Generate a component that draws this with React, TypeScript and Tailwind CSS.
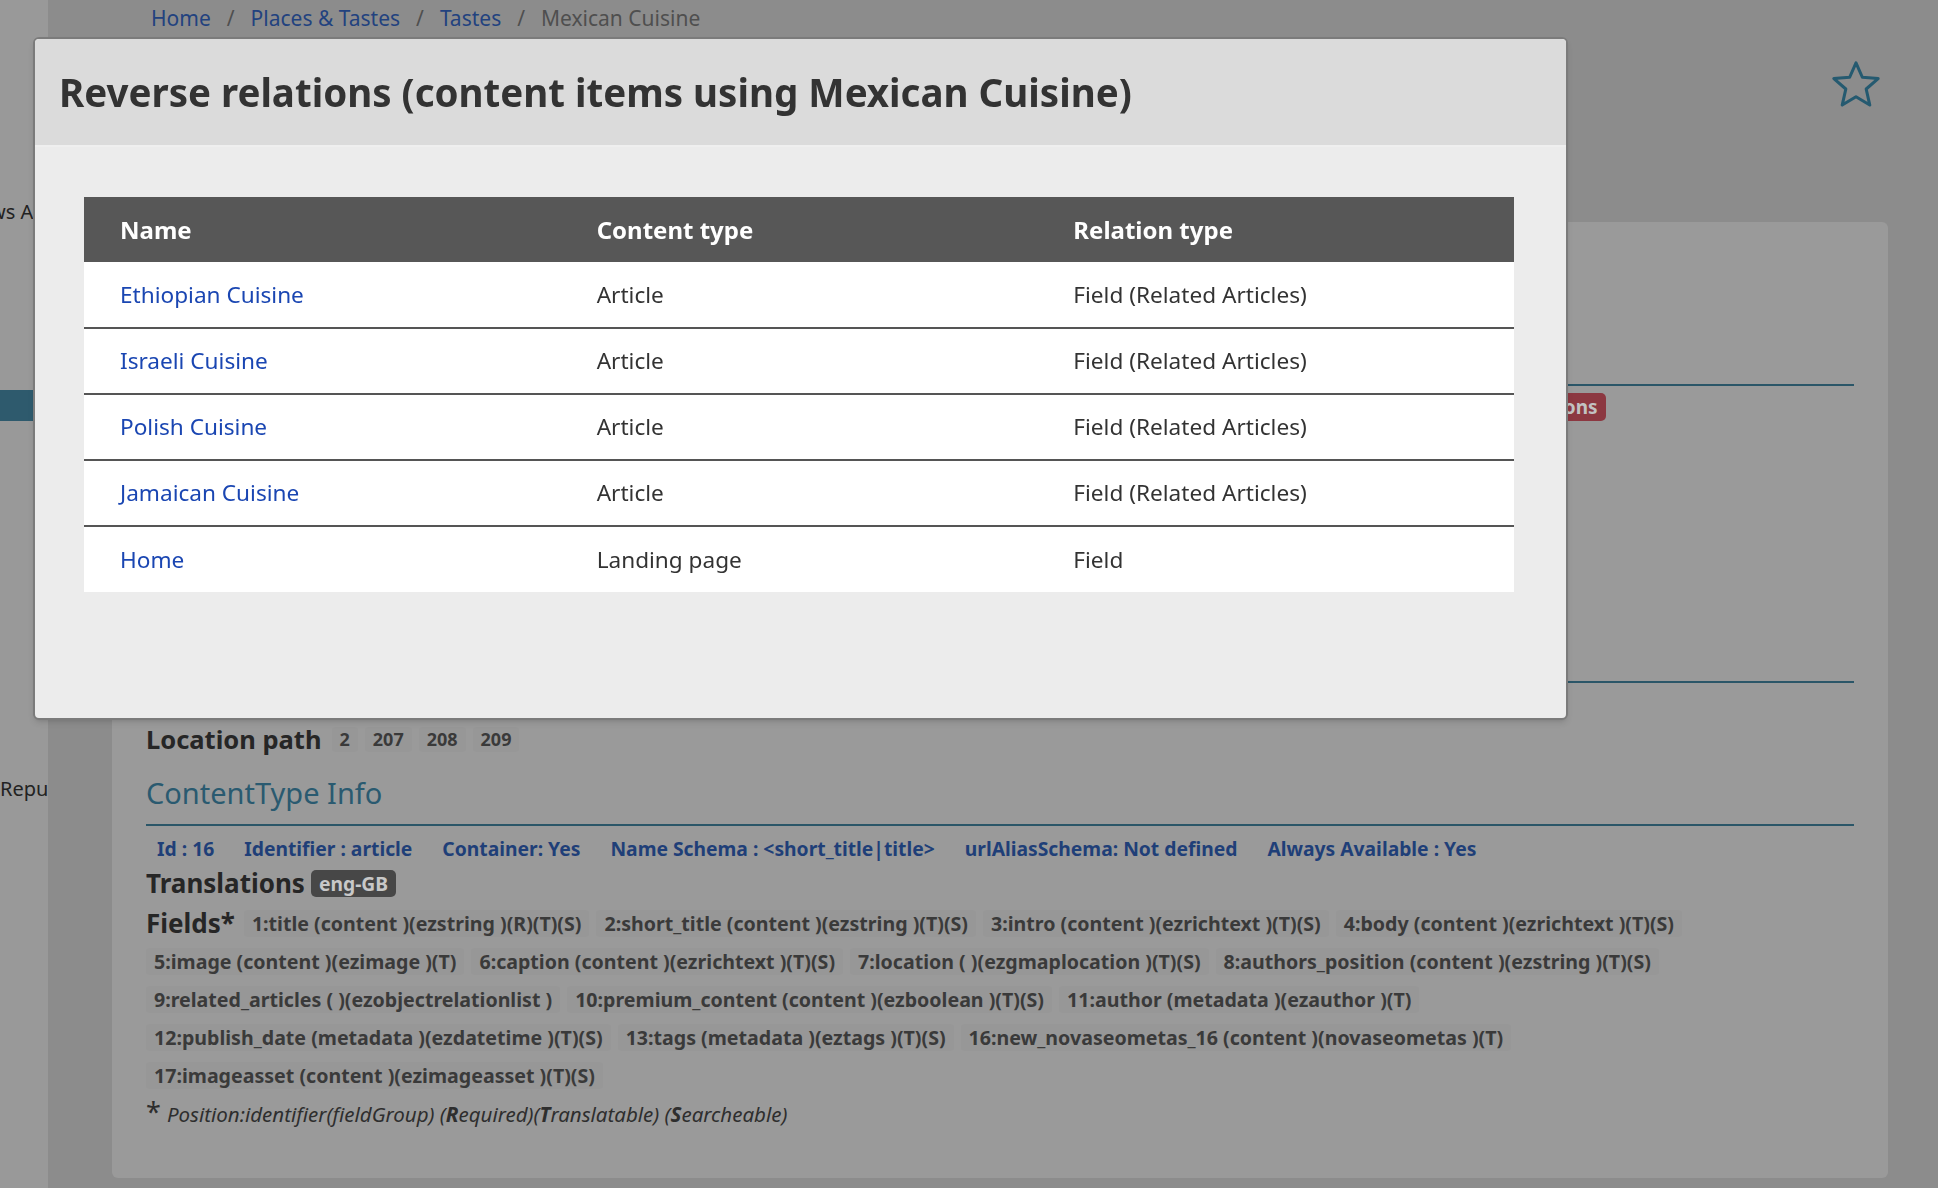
import React from "react";

const rows = [
  { name: "Ethiopian Cuisine", type: "Article", relation: "Field (Related Articles)" },
  { name: "Israeli Cuisine", type: "Article", relation: "Field (Related Articles)" },
  { name: "Polish Cuisine", type: "Article", relation: "Field (Related Articles)" },
  { name: "Jamaican Cuisine", type: "Article", relation: "Field (Related Articles)" },
  { name: "Home", type: "Landing page", relation: "Field" },
];

const fieldRows = [
  [
    "1:title (content )(ezstring )(R)(T)(S)",
    "2:short_title (content )(ezstring )(T)(S)",
    "3:intro (content )(ezrichtext )(T)(S)",
    "4:body (content )(ezrichtext )(T)(S)",
  ],
  [
    "5:image (content )(ezimage )(T)",
    "6:caption (content )(ezrichtext )(T)(S)",
    "7:location ( )(ezgmaplocation )(T)(S)",
    "8:authors_position (content )(ezstring )(T)(S)",
  ],
  [
    "9:related_articles ( )(ezobjectrelationlist )",
    "10:premium_content (content )(ezboolean )(T)(S)",
    "11:author (metadata )(ezauthor )(T)",
  ],
  [
    "12:publish_date (metadata )(ezdatetime )(T)(S)",
    "13:tags (metadata )(eztags )(T)(S)",
    "16:new_novaseometas_16 (content )(novaseometas )(T)",
  ],
  ["17:imageasset (content )(ezimageasset )(T)(S)"],
];

const info = [
  "Id : 16",
  "Identifier : article",
  "Container: Yes",
  "Name Schema : <short_title|title>",
  "urlAliasSchema: Not defined",
  "Always Available : Yes",
];

function FieldBadge({ label }: { label: string }) {
  return (
    <span className="rounded-[4px] bg-[#979797] px-[8px] py-[2px] text-[19.6px] font-bold leading-[23px] text-[#3a3a3a]">
      {label}
    </span>
  );
}

function Sidebar() {
  return (
    <aside className="flex w-[48px] shrink-0 flex-col overflow-hidden bg-[#999999] text-[20px] text-[#222]">
      <div className="mt-[198px] ml-[-36px] whitespace-nowrap leading-[28px]">News Articles</div>
      <div className="mt-[164px] h-[31px] w-[300px] bg-[#2e5a6d]" />
      <div className="mt-[354px] whitespace-nowrap leading-[28px]">Republic</div>
    </aside>
  );
}

function Breadcrumb() {
  return (
    <nav className="flex h-[37px] items-center gap-[16px] pl-[103px] text-[21px] leading-none">
      <a className="text-[#22427f]">Home</a>
      <span className="text-[#4f4f4f]">/</span>
      <a className="text-[#22427f]">Places &amp; Tastes</a>
      <span className="text-[#4f4f4f]">/</span>
      <a className="text-[#22427f]">Tastes</a>
      <span className="text-[#4f4f4f]">/</span>
      <span className="text-[#4f4f4f]">Mexican Cuisine</span>
    </nav>
  );
}

function StarIcon() {
  return (
    <svg width="52" height="51" viewBox="0 0 46 45" fill="none">
      <path
        d="M23 2.5 L28.6 15.2 L42.6 16.4 L32 25.6 L35.2 39.8 L23 32.4 L10.8 39.8 L14 25.6 L3.4 16.4 L17.4 15.2 Z"
        stroke="#255a70"
        strokeWidth="2.7"
        strokeLinejoin="round"
      />
    </svg>
  );
}

function Panel() {
  return (
    <section className="mr-[50px] ml-[64px] rounded-[6px] bg-[#9a9a9a] px-[34px] pt-[40px] pb-[48px]">
      {/* heading area, covered by the modal */}
      <div className="h-[124px] border-b-2 border-[#2b5668]" />
      <div className="mt-[7px] flex items-center gap-[8px]">
        <div className="w-[1347px]" />
        <span className="rounded-[5px] bg-[#8c3841] px-[8px] text-[19px] font-bold leading-[28px] text-[#c2c2c2]">
          Relations
        </span>
      </div>
      <div className="h-[262px] border-b-2 border-[#2b5668]" />
      <div className="mt-[40px] flex items-center gap-[10px]">
        <span className="text-[25.5px] font-bold leading-[32px] text-[#262626]">Location path</span>
        <div className="flex gap-[7px]">
          {["2", "207", "208", "209"].map((p) => (
            <span
              key={p}
              className="rounded-[4px] bg-[#979797] px-[8px] text-[18px] font-bold leading-[25px] text-[#3a3a3a]"
            >
              {p}
            </span>
          ))}
        </div>
      </div>
      <h3 className="mt-[17px] border-b-2 border-[#2b5668] pb-[10px] text-[29px] leading-[42px] text-[#2a5a70]">
        ContentType Info
      </h3>
      <div className="mt-[9px] flex gap-[8px]">
        {info.map((i) => (
          <span key={i} className="px-[11px] text-[19.3px] font-bold leading-[27px] text-[#1f3f78]">
            {i}
          </span>
        ))}
      </div>
      <div className="mt-[4px] flex items-center gap-[6px]">
        <span className="text-[26px] font-bold leading-[34px] text-[#262626]">Translations</span>
        <span className="rounded-[5px] bg-[#474747] px-[8px] text-[19.3px] font-bold leading-[27px] text-[#c8c8c8]">
          eng-GB
        </span>
      </div>
      <div className="mt-[10px] flex flex-col gap-[11px]">
        {fieldRows.map((r, idx) => (
          <div key={idx} className="flex items-center gap-[7px]">
            {idx === 0 && (
              <span className="mr-[2px] text-[26px] font-bold leading-[27px] text-[#262626]">Fields*</span>
            )}
            {r.map((f) => (
              <FieldBadge key={f} label={f} />
            ))}
          </div>
        ))}
      </div>
      <p className="mt-[9px] flex items-baseline gap-[6px] text-[20.5px] italic text-[#2e2e2e]">
        <span className="text-[27px] not-italic leading-none">*</span>
        <span>
          Position:identifier(fieldGroup) (<b>R</b>equired)(<b>T</b>ranslatable) (<b>S</b>earcheable)
        </span>
      </p>
    </section>
  );
}

function ReverseRelationsModal() {
  return (
    <div className="fixed top-[37px] left-[33px] flex h-[683px] w-[1535px] flex-col overflow-hidden rounded-[6px] border-2 border-[#7b7b7b] bg-[#ececec] shadow-md">
      <div className="flex h-[108px] shrink-0 items-center border-b-2 border-[#efefef] bg-[#dbdbdb] px-[24px]">
        <h2 className="text-[38.5px] leading-none font-bold text-[#333]">
          Reverse relations (content items using Mexican Cuisine)
        </h2>
      </div>
      <div className="px-[49px] pt-[50px]">
        <table className="w-[1430px] table-fixed border-collapse text-[22.6px]">
          <thead>
            <tr className="h-[65px] bg-[#575757] text-left text-[24px] text-white">
              <th className="pl-[36px] font-bold">Name</th>
              <th className="pl-[36px] font-bold">Content type</th>
              <th className="pl-[36px] font-bold">Relation type</th>
            </tr>
          </thead>
          <tbody>
            {rows.map((r, i) => (
              <tr
                key={r.name}
                className={i === 0 ? "h-[66px] bg-white" : "h-[66px] border-t-2 border-[#555] bg-white"}
              >
                <td className="pl-[36px] text-[#1a46b2]">{r.name}</td>
                <td className="pl-[36px] text-[#333]">{r.type}</td>
                <td className="pl-[36px] text-[#333]">{r.relation}</td>
              </tr>
            ))}
          </tbody>
        </table>
      </div>
    </div>
  );
}

export default function App() {
  return (
    <div className="flex min-h-[1188px] bg-[#8c8c8c] font-['Noto_Sans',sans-serif]">
      <Sidebar />
      <main className="flex-1">
        <Breadcrumb />
        <div className="flex h-[185px] justify-end pt-[23px] pr-[56px]">
          <StarIcon />
        </div>
        <Panel />
      </main>
      <ReverseRelationsModal />
    </div>
  );
}
